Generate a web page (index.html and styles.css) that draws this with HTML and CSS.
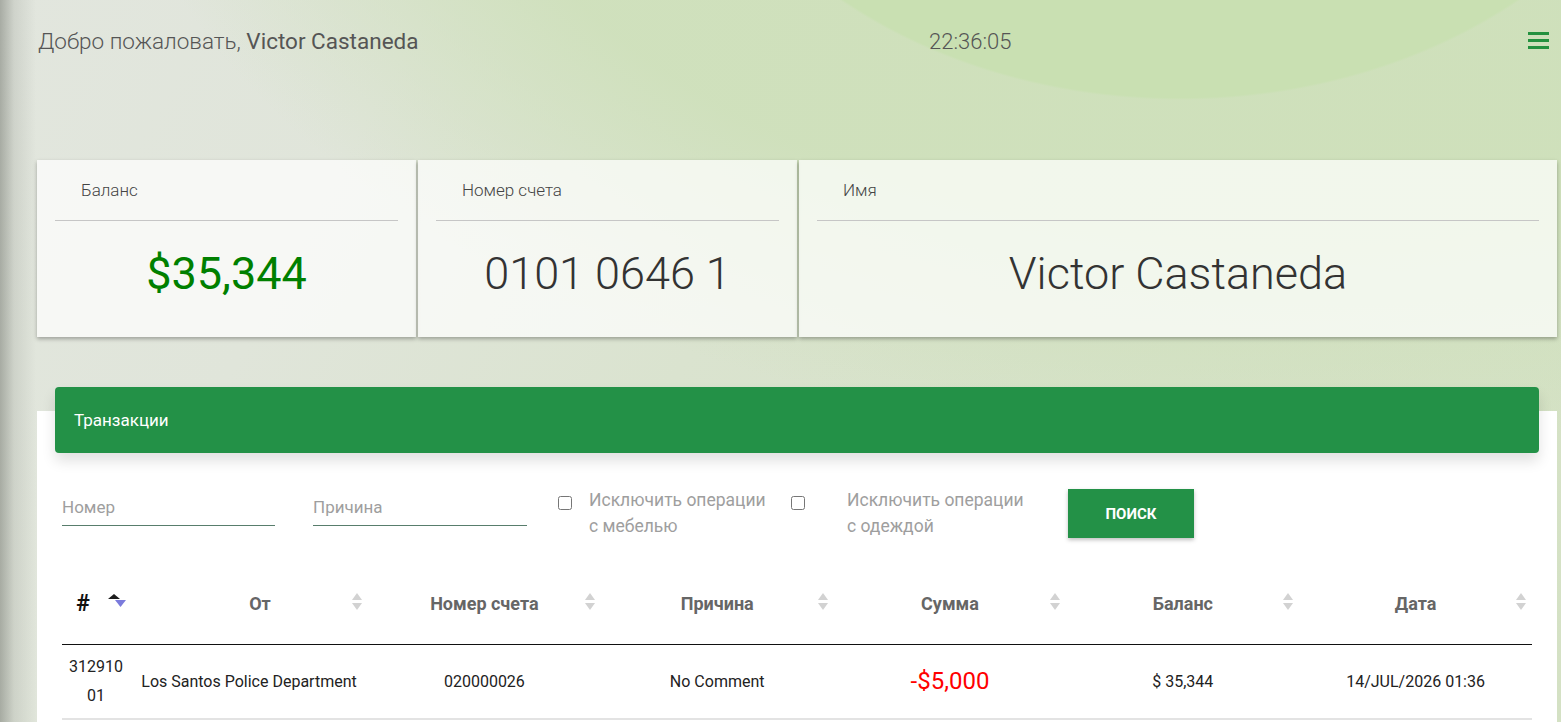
FILE: index.html
```html
<!DOCTYPE html>
<html lang="ru">
<head>
    <meta charset="utf-8">
    <title>Банк</title>
    <link rel="stylesheet" href="styles.css">
</head>
<body>
    <div class="page">
        <header class="top_bar">
            <div class="welcome">Добро пожаловать, <span class="welcome_name">Victor Castaneda</span></div>
            <div class="clock">22:36:05</div>
            <button class="menu_button" type="button" aria-label="Меню">
                <svg width="21" height="18" viewBox="0 0 21 18">
                    <rect x="0" y="0" width="21" height="3" fill="#23913f"/>
                    <rect x="0" y="7" width="21" height="3" fill="#23913f"/>
                    <rect x="0" y="14" width="21" height="3" fill="#23913f"/>
                </svg>
            </button>
        </header>

        <section class="info_cards">
            <div class="info_card">
                <div class="info_label">Баланс</div>
                <div class="info_value info_value_money">$35,344</div>
            </div>
            <div class="info_card">
                <div class="info_label">Номер счета</div>
                <div class="info_value">0101 0646 1</div>
            </div>
            <div class="info_card">
                <div class="info_label">Имя</div>
                <div class="info_value">Victor Castaneda</div>
            </div>
        </section>

        <section class="transactions">
            <div class="transactions_header">Транзакции</div>

            <form class="filters" onsubmit="return false">
                <input class="filter_input" type="text" placeholder="Номер">
                <input class="filter_input filter_input_reason" type="text" placeholder="Причина">
                <label class="filter_check">
                    <input type="checkbox">
                    <span class="filter_check_text">Исключить операции<br>с мебелью</span>
                </label>
                <label class="filter_check filter_check_wide">
                    <input type="checkbox">
                    <span class="filter_check_text">Исключить операции<br>с одеждой</span>
                </label>
                <button class="search_button" type="submit">ПОИСК</button>
            </form>

            <table class="tx_table">
                <colgroup>
                    <col class="col_num">
                    <col class="col_from">
                    <col><col><col><col><col>
                </colgroup>
                <thead>
                    <tr>
                        <th class="th_num">#
                            <span class="sort_icon">
                                <svg width="18" height="14" viewBox="0 0 18 14">
                                    <polygon points="0,5 6,0 12,5" fill="#1d1d1d"/>
                                    <polygon points="7,6 18,6 12.5,13" fill="#7b7bdc"/>
                                </svg>
                            </span>
                        </th>
                        <th class="th_from">От<span class="sort_icon"><svg width="10" height="17" viewBox="0 0 10 17"><polygon points="0,7 5,0 10,7" fill="#d2d2d2"/><polygon points="0,10 10,10 5,17" fill="#d2d2d2"/></svg></span></th>
                        <th>Номер счета<span class="sort_icon"><svg width="10" height="17" viewBox="0 0 10 17"><polygon points="0,7 5,0 10,7" fill="#d2d2d2"/><polygon points="0,10 10,10 5,17" fill="#d2d2d2"/></svg></span></th>
                        <th>Причина<span class="sort_icon"><svg width="10" height="17" viewBox="0 0 10 17"><polygon points="0,7 5,0 10,7" fill="#d2d2d2"/><polygon points="0,10 10,10 5,17" fill="#d2d2d2"/></svg></span></th>
                        <th>Сумма<span class="sort_icon"><svg width="10" height="17" viewBox="0 0 10 17"><polygon points="0,7 5,0 10,7" fill="#d2d2d2"/><polygon points="0,10 10,10 5,17" fill="#d2d2d2"/></svg></span></th>
                        <th>Баланс<span class="sort_icon"><svg width="10" height="17" viewBox="0 0 10 17"><polygon points="0,7 5,0 10,7" fill="#d2d2d2"/><polygon points="0,10 10,10 5,17" fill="#d2d2d2"/></svg></span></th>
                        <th>Дата<span class="sort_icon"><svg width="10" height="17" viewBox="0 0 10 17"><polygon points="0,7 5,0 10,7" fill="#d2d2d2"/><polygon points="0,10 10,10 5,17" fill="#d2d2d2"/></svg></span></th>
                    </tr>
                </thead>
                <tbody>
                    <tr>
                        <td class="td_num">31291001</td>
                        <td>Los Santos Police Department</td>
                        <td>020000026</td>
                        <td>No Comment</td>
                        <td class="td_amount">-$5,000</td>
                        <td>$ 35,344</td>
                        <td>14/JUL/2026 01:36</td>
                    </tr>
                </tbody>
            </table>
        </section>
    </div>
</body>
</html>
```

FILE: styles.css
```css
body {
    margin: 0;
    height: 100vh;
    overflow: hidden;
    font-family: Roboto, "Noto Sans", Arial, sans-serif;
    color: #555;
    background-color: #d9e3cf;
    background-image:
        linear-gradient(to right, rgba(120, 124, 116, 0.55), rgba(120, 124, 116, 0.18) 14px, rgba(120, 124, 116, 0) 36px),
        radial-gradient(ellipse 515px 400px at 1180px -300px, #c9e0b2 99.4%, rgba(201, 224, 178, 0) 100%),
        radial-gradient(ellipse 1200px 700px at 1300px -250px, rgba(206, 224, 186, 0.9) 70%, rgba(206, 224, 186, 0) 100%),
        linear-gradient(118deg, #e2e6de 0%, #e0e5da 22%, #dae3cf 45%, #d6e2c8 70%, #d4e1c4 100%);
}

.page {
    padding: 0 4px 0 37px;
}

/* top bar */
.top_bar {
    display: flex;
    justify-content: space-between;
    align-items: center;
    height: 30px;
    padding: 26px 8px 0 1px;
}
.welcome {
    font-size: 22.5px;
    font-weight: 300;
    color: #555;
}
.welcome_name {
    font-weight: 400;
}
.clock {
    margin-right: 6px;
    font-size: 22px;
    font-weight: 300;
    color: #555;
}
.menu_button {
    border: none;
    background: none;
    padding: 0;
    width: 21px;
    height: 18px;
    margin-top: -1px;
}
.menu_button svg {
    display: block;
}

/* cards */
.info_cards {
    display: grid;
    grid-template-columns: 1fr 1fr 2fr;
    gap: 2px;
    margin-top: 104px;
}
.info_card {
    background: rgba(255, 255, 255, 0.72);
    box-shadow: 0 2px 4px rgba(0, 0, 0, 0.3);
    padding: 20px 0 37px;
}
.info_label {
    margin: 0 18px;
    padding: 0 0 20px 26px;
    line-height: 20px;
    font-size: 17px;
    font-weight: 300;
    color: #444;
    border-bottom: 1px solid #c6c6c6;
}
.info_value {
    margin-top: 27px;
    line-height: 52px;
    font-size: 45px;
    font-weight: 300;
    color: #333;
    text-align: center;
}
.info_value_money {
    font-weight: 400;
    color: #008000;
}

/* transactions */
.transactions {
    margin-top: 74px;
    background: #fff;
    padding: 0 25px 40px;
}
.transactions_header {
    position: relative;
    top: -24px;
    margin: 0 -7px -24px;
    height: 66px;
    line-height: 66px;
    padding-left: 19px;
    background: #239147;
    border-radius: 4px;
    box-shadow: 0 8px 14px rgba(0, 0, 0, 0.12);
    color: #fff;
    font-size: 17px;
}
.filters {
    display: flex;
    align-items: flex-start;
    margin-top: 36px;
}
.filter_input {
    width: 213px;
    height: 36px;
    padding: 0;
    border: none;
    border-bottom: 1px solid #587d6c;
    background: transparent;
    font-family: inherit;
    font-size: 17px;
    color: #333;
    outline: none;
}
.filter_input::placeholder {
    color: #9e9e9e;
}
.filter_input_reason {
    margin-left: 38px;
    width: 214px;
}
.filter_check {
    display: flex;
    align-items: flex-start;
    margin-left: 31px;
    width: 233px;
}
.filter_check input {
    width: 14px;
    height: 14px;
    margin: 7px 17px 0 0;
}
.filter_check_wide {
    margin-left: 0;
    width: 277px;
}
.filter_check_wide input {
    margin-right: 42px;
}
.filter_check_text {
    margin-top: -2px;
    font-size: 17.5px;
    line-height: 26px;
    color: #9e9e9e;
}
.search_button {
    width: 126px;
    height: 49px;
    border: none;
    background: #239147;
    color: #fff;
    font-family: inherit;
    font-size: 15px;
    font-weight: 700;
    box-shadow: 0 2px 4px rgba(0, 0, 0, 0.25);
}

/* table */
.tx_table {
    width: 100%;
    margin-top: 25px;
    border-collapse: collapse;
    table-layout: fixed;
}
.col_num {
    width: 68px;
}
.col_from {
    width: 238px;
}
.tx_table th {
    position: relative;
    height: 78px;
    padding: 0 10px 2px;
    border-bottom: 1px solid #111;
    font-size: 18px;
    font-weight: 700;
    color: #666;
    text-align: center;
}
.tx_table th.th_num {
    padding: 0 32px 2px 6px;
    font-size: 23px;
    color: #111;
}
.tx_table th.th_from {
    padding-left: 32px;
}
.sort_icon {
    position: absolute;
    right: 6px;
    top: 29px;
    line-height: 0;
}
.th_num .sort_icon {
    right: 4px;
    top: 30px;
}
.tx_table td {
    padding: 7px 6px 8px;
    border-bottom: 2px solid #e3e3e3;
    font-size: 16px;
    line-height: 29px;
    color: #222;
    text-align: center;
}
.tx_table td.td_num {
    word-break: break-all;
}
.tx_table td.td_amount {
    font-size: 24px;
    color: #f00;
}
```
